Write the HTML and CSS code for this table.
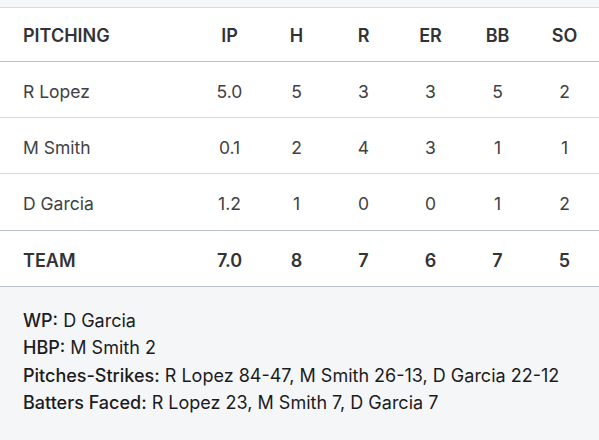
FILE: index.html
```html
<!DOCTYPE html>
<html>
<head>
<meta charset="utf-8">
<link rel="stylesheet" href="styles.css">
</head>
<body>
<div class="page">
  <div class="topstrip"></div>
  <div class="table">
    <div class="row head">
      <div class="name">PITCHING</div><div>IP</div><div>H</div><div>R</div><div>ER</div><div>BB</div><div>SO</div>
    </div>
    <div class="row">
      <div class="name">R Lopez</div><div>5.0</div><div>5</div><div>3</div><div>3</div><div>5</div><div>2</div>
    </div>
    <div class="row">
      <div class="name">M Smith</div><div>0.1</div><div>2</div><div>4</div><div>3</div><div>1</div><div>1</div>
    </div>
    <div class="row last">
      <div class="name">D Garcia</div><div>1.2</div><div>1</div><div>0</div><div>0</div><div>1</div><div>2</div>
    </div>
    <div class="row team">
      <div class="name">TEAM</div><div>7.0</div><div>8</div><div>7</div><div>6</div><div>7</div><div>5</div>
    </div>
  </div>
  <div class="notes">
    <p><b>WP:</b> D Garcia</p>
    <p><b>HBP:</b> M Smith 2</p>
    <p><b>Pitches-Strikes:</b> R Lopez 84-47, M Smith 26-13, D Garcia 22-12</p>
    <p><b>Batters Faced:</b> R Lopez 23, M Smith 7, D Garcia 7</p>
  </div>
</div>
</body>
</html>
```

FILE: styles.css
```css
html, body {
  margin: 0;
  padding: 0;
  background: #f5f6f8;
}
body {
  width: 599px;
  height: 440px;
  overflow: hidden;
  font-family: Inter, "Liberation Sans", sans-serif;
  font-size: 17.5px;
  color: #414144;
}
.topstrip {
  height: 7px;
  background: #f5f6f8;
  border-bottom: 1px solid #d5dbe2;
}
.table {
  background: #ffffff;
  border-bottom: 1px solid #b7c3d0;
}
.row {
  display: grid;
  grid-template-columns: 1fr repeat(6, 67px);
  padding-right: 1px;
  padding-top: 3px;
  height: 56px;
  align-items: center;
  text-align: center;
  border-bottom: 1px solid #d5dbe2;
  box-sizing: border-box;
}
.row.head {
  box-sizing: content-box;
  padding-top: 1px;
  height: 52px;
  font-size: 18px;
  font-weight: 600;
  color: #333336;
  border-bottom-color: #b7c3d0;
}
.row.last {
  height: 57px;
  border-bottom-color: #b7c3d0;
}
.row.team {
  border-bottom: none;
  height: 55px;
  font-size: 18px;
  font-weight: 600;
  color: #333336;
}
.name {
  text-align: left;
  padding-left: 23px;
}
.notes {
  padding: 20px 23px 0;
  font-size: 18px;
}
.notes p {
  margin: 0;
  line-height: 27.3px;
  color: #1c1c1e;
}
.notes b {
  font-weight: 500;
}
```
